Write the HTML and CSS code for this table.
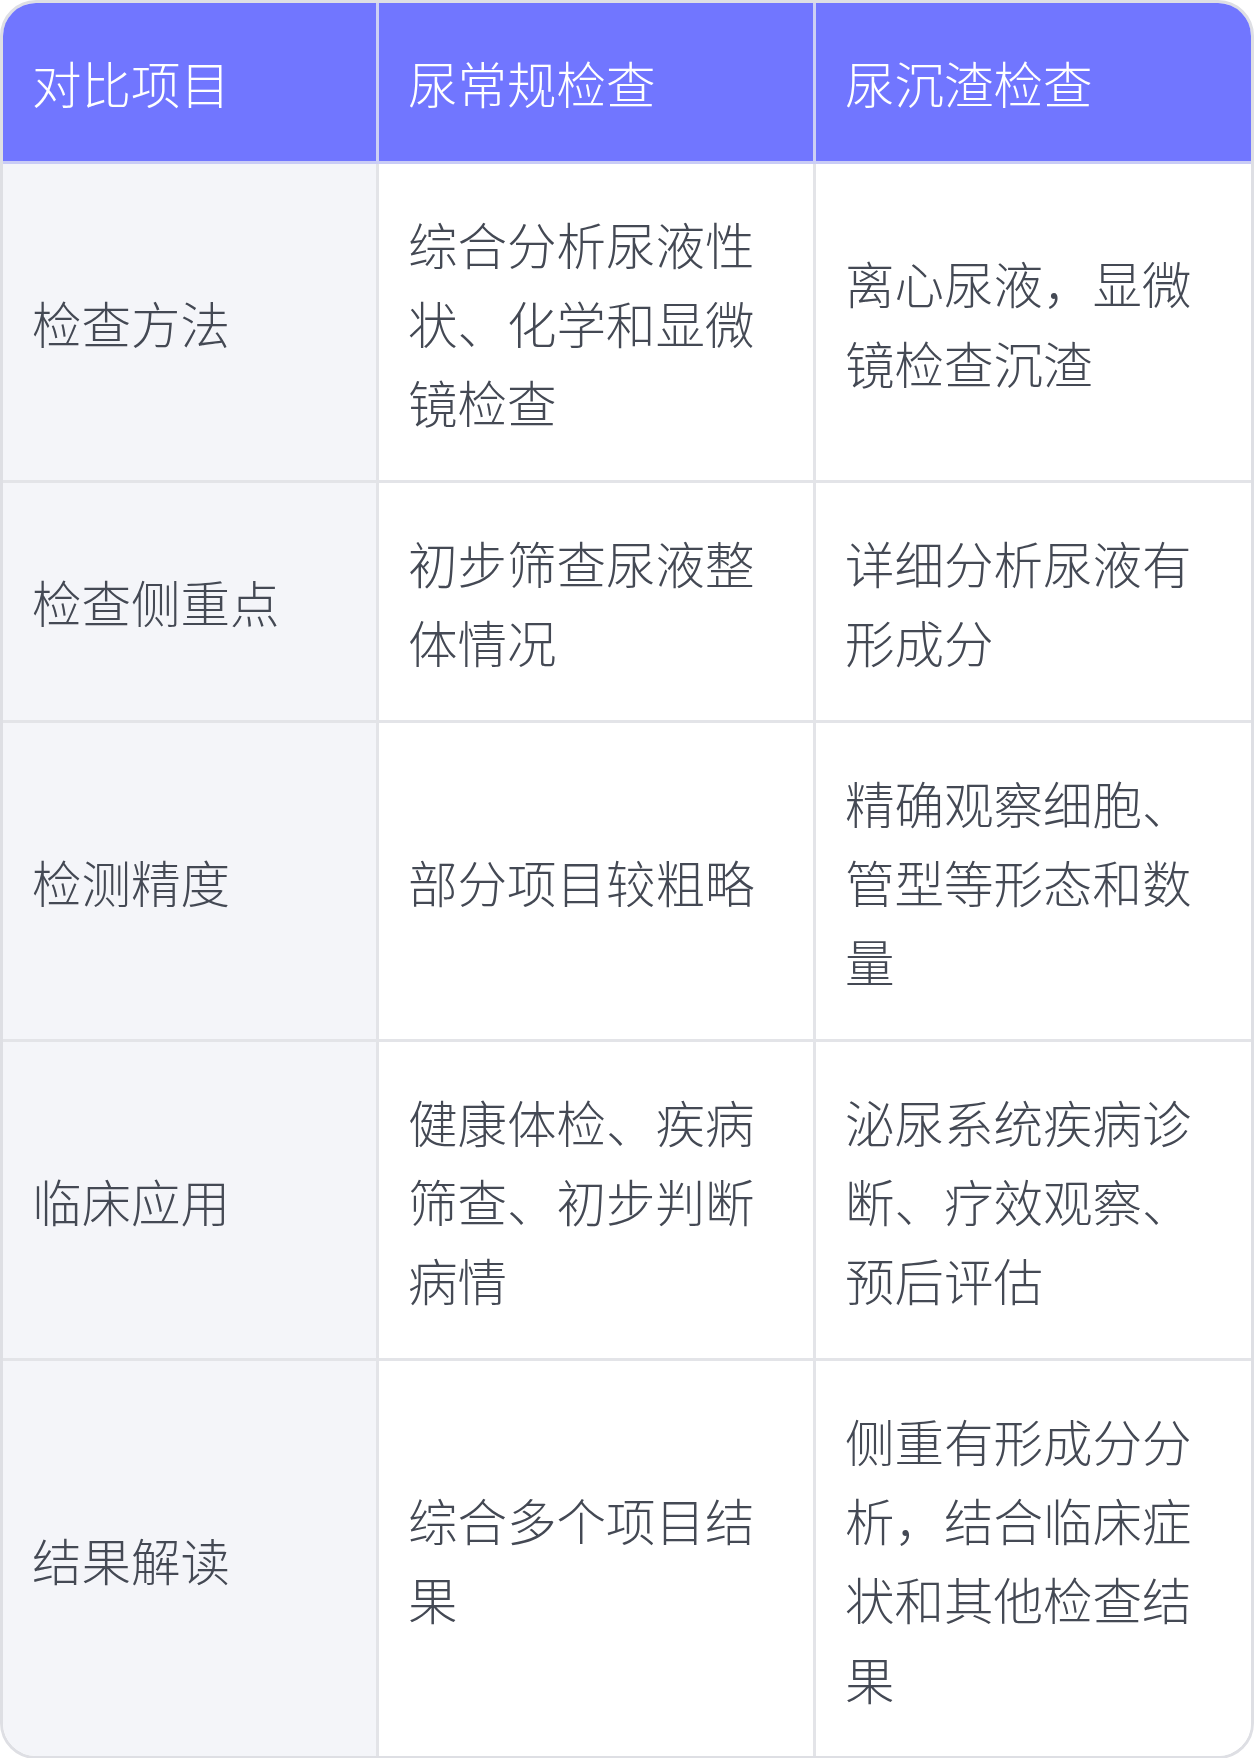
FILE: index.html
```html
<!DOCTYPE html>
<html lang="zh-CN">
<head>
<meta charset="utf-8">
<title>尿常规检查与尿沉渣检查对比</title>
<link rel="stylesheet" href="styles.css">
</head>
<body>
<div class="table" role="table">
  <div class="cell head" role="columnheader">对比项目</div>
  <div class="cell head" role="columnheader">尿常规检查</div>
  <div class="cell head last" role="columnheader">尿沉渣检查</div>

  <div class="cell label" role="rowheader">检查方法</div>
  <div class="cell" role="cell">综合分析尿液性状、化学和显微镜检查</div>
  <div class="cell last" role="cell">离心尿液，显微镜检查沉渣</div>

  <div class="cell label" role="rowheader">检查侧重点</div>
  <div class="cell" role="cell">初步筛查尿液整体情况</div>
  <div class="cell last" role="cell">详细分析尿液有形成分</div>

  <div class="cell label" role="rowheader">检测精度</div>
  <div class="cell" role="cell">部分项目较粗略</div>
  <div class="cell last" role="cell">精确观察细胞、管型等形态和数量</div>

  <div class="cell label" role="rowheader">临床应用</div>
  <div class="cell" role="cell">健康体检、疾病筛查、初步判断病情</div>
  <div class="cell last" role="cell">泌尿系统疾病诊断、疗效观察、预后评估</div>

  <div class="cell label bottom" role="rowheader">结果解读</div>
  <div class="cell bottom" role="cell">综合多个项目结果</div>
  <div class="cell last bottom" role="cell">侧重有形成分分析，结合临床症状和其他检查结果</div>
</div>
</body>
</html>
```

FILE: styles.css
```css
html, body {
  margin: 0;
  padding: 0;
  background: #ffffff;
}

body {
  font-family: "Noto Sans CJK SC", "Noto Sans", sans-serif;
}

.table {
  box-sizing: border-box;
  width: 1254px;
  border: 3px solid #dedfe4;
  border-radius: 36px;
  overflow: hidden;
  display: grid;
  grid-template-columns: 376px 437px 1fr;
}

.cell {
  display: flex;
  align-items: center;
  padding: 40px 28px 38.5px 29px;
  font-size: 49.5px;
  font-weight: 300;
  line-height: 79.2px;
  color: #444954;
  background: #ffffff;
  border-right: 3px solid #e3e4e8;
  border-bottom: 3px solid #e3e4e8;
  word-break: break-all;
}

.cell.last {
  border-right: none;
}

.cell.bottom {
  border-bottom: none;
}

.cell.head {
  background: #7176ff;
  color: #ffffff;
  border-right-color: #cdd0f4;
  border-bottom-color: #c9ccf6;
}

.cell.label {
  background: #f4f5f9;
}
```
